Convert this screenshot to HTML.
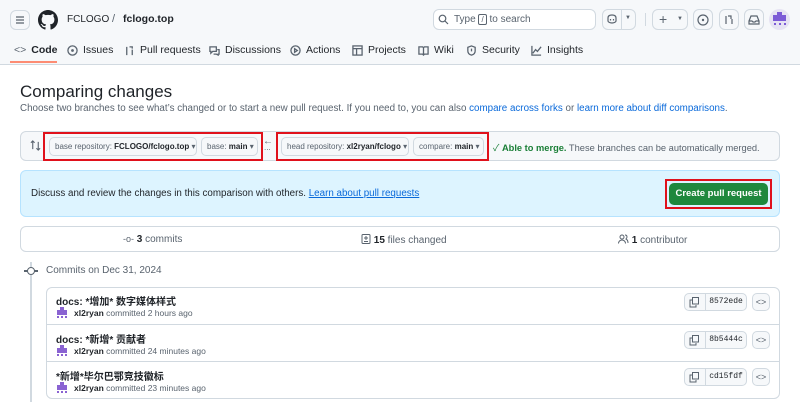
<!DOCTYPE html>
<html><head><meta charset="utf-8"><style>
*{box-sizing:border-box;margin:0;padding:0}
body{width:800px;height:411px;overflow:hidden;background:#fff;font-family:"Liberation Sans","Noto Sans CJK SC",sans-serif;color:#1f2328;font-size:12px;position:relative}
.a{position:absolute}
.hdr{left:0;top:0;width:800px;height:65px;background:#f6f8fa;border-bottom:1px solid #d1d9e0}
.btn{position:absolute;border:1px solid #d1d9e0;border-radius:6px;background:#f6f8fa}
.tab{position:absolute;top:44px;font-size:10.5px;display:flex;align-items:center;gap:5px;color:#1f2328;white-space:nowrap}
.tab svg{width:11px;height:11px;fill:none;stroke:#59636e;stroke-width:1.4}
.sel{position:absolute;top:137px;height:19px;border:1px solid #d1d9e0;border-radius:5px;background:#f6f8fa;font-size:8px;color:#59636e;line-height:17px;padding-left:5px;white-space:nowrap;overflow:hidden}
.sel b{color:#1f2328}
.red{position:absolute;border:2px solid #e0111b}
.row{position:absolute;left:46px;width:734px;height:37px;border-top:1px solid #d1d9e0}
.row .t{position:absolute;left:10px;top:6px;font-size:10px;font-weight:bold;white-space:nowrap}
.row .m{position:absolute;left:28px;top:21px;font-size:8.5px;color:#59636e;white-space:nowrap}
.row .m b{color:#1f2328}
.av{position:absolute;left:10px;top:20px;width:12px;height:11px}
.cp{position:absolute;left:638px;top:6px;width:63px;height:18px;border:1px solid #d1d9e0;border-radius:5px;background:#f6f8fa}
.cp svg{position:absolute;left:4px;top:3px}
.cp span{position:absolute;left:20px;top:0;bottom:0;right:0;border-left:1px solid #d1d9e0;font-family:"Liberation Mono",monospace;font-size:8px;line-height:16px;text-align:center;color:#1f2328}
.cd{position:absolute;left:706px;top:6px;width:18px;height:18px;border:1px solid #d1d9e0;border-radius:5px;background:#f6f8fa;font-size:9px;text-align:center;line-height:16px;color:#59636e}
.st{position:absolute;top:234px;font-size:10px;color:#59636e;white-space:nowrap;line-height:11px}
.st b{color:#1f2328}
</style></head><body>
<div class="a hdr"></div>
<div class="btn" style="left:10px;top:10px;width:20px;height:20px"><svg width="18" height="18" viewBox="0 0 18 18"><path d="M5 6h8M5 9h8M5 12h8" stroke="#59636e" stroke-width="1.3"/></svg></div>
<svg class="a" style="left:38px;top:10px" width="20" height="20" viewBox="0 0 16 16"><path fill="#1f2328" d="M8 0C3.58 0 0 3.58 0 8c0 3.540 2.29 6.53 5.47 7.59.4.07.55-.17.55-.38 0-.19-.01-.82-.01-1.49-2.01.37-2.53-.49-2.69-.94-.09-.23-.48-.94-.82-1.130-.28-.15-.68-.52-.01-.53.63-.01 1.08.58 1.23.82.72 1.21 1.87.87 2.33.66.07-.52.28-.87.51-1.07-1.78-.2-3.64-.89-3.64-3.95 0-.87.31-1.59.82-2.15-.08-.2-.36-1.02.08-2.12 0 0 .67-.21 2.2.82.64-.18 1.32-.27 2-.27.68 0 1.36.09 2 .27 1.53-1.04 2.2-.82 2.2-.82.44 1.1.16 1.92.08 2.12.51.56.82 1.27.82 2.15 0 3.07-1.87 3.75-3.65 3.95.29.25.54.73.54 1.48 0 1.07-.01 1.93-.01 2.2 0 .21.15.46.55.38A8.013 8.013 0 0016 8c0-4.42-3.58-8-8-8z"/></svg>
<div class="a" style="left:67px;top:14px;font-size:10px">FCLOGO</div>
<div class="a" style="left:112px;top:13px;font-size:11px;color:#59636e">/</div>
<div class="a" style="left:123px;top:13px;font-size:10.5px;font-weight:bold">fclogo.top</div>
<div class="a" style="left:433px;top:9px;width:163px;height:21px;border:1px solid #d1d9e0;border-radius:6px;background:#fff"></div>
<svg class="a" style="left:438px;top:14px" width="11" height="11" viewBox="0 0 11 11"><circle cx="4.5" cy="4.5" r="3.3" fill="none" stroke="#59636e" stroke-width="1.2"/><path d="M7 7l3 3" stroke="#59636e" stroke-width="1.2"/></svg>
<div class="a" style="left:454px;top:14px;font-size:10px;color:#59636e">Type <span style="border:1px solid #59636e;border-radius:2px;padding:0 2px;font-size:8px">/</span> to search</div>
<div class="btn" style="left:602px;top:9px;width:34px;height:21px"></div>
<div class="a" style="left:621px;top:9px;width:1px;height:21px;background:#d1d9e0"></div>
<svg class="a" style="left:606px;top:13px" width="12" height="12" viewBox="0 0 12 12"><path d="M2 5c0-2 1-3 4-3s4 1 4 3v3c0 1-2 2-4 2s-4-1-4-2z" fill="none" stroke="#59636e" stroke-width="1.2"/><path d="M4.5 6v1.5M7.5 6v1.5" stroke="#59636e" stroke-width="1.2"/></svg>
<div class="a" style="left:625px;top:15px;font-size:6px;color:#59636e">▼</div>
<div class="a" style="left:645px;top:13px;width:1px;height:13px;background:#d1d9e0"></div>
<div class="btn" style="left:652px;top:9px;width:36px;height:21px"><span style="position:absolute;left:6px;top:1px;font-size:14px;color:#59636e">+</span><span style="position:absolute;left:24px;top:6px;font-size:6px;color:#59636e">▼</span></div>
<div class="btn" style="left:693px;top:9px;width:20px;height:21px"><svg width="18" height="19"><circle cx="9" cy="10" r="5" fill="none" stroke="#59636e" stroke-width="1.2"/><circle cx="9" cy="10" r="1.2" fill="#59636e"/></svg></div>
<div class="btn" style="left:719px;top:9px;width:20px;height:21px"><svg width="18" height="19"><path d="M6 6v8M12 9v5M8 6h3v3" fill="none" stroke="#59636e" stroke-width="1.2"/></svg></div>
<div class="btn" style="left:744px;top:9px;width:20px;height:21px"><svg width="18" height="19"><path d="M4 11l2-5h6l2 5v3H4zM4 11h3l1 1h2l1-1h3" fill="none" stroke="#59636e" stroke-width="1.2"/></svg></div>
<div class="a" style="left:769px;top:9px;width:21px;height:21px;border-radius:50%;background:#e6e3f3;overflow:hidden"><svg width="21" height="21"><path d="M4 6h4V3h5v3h4v6H4z" fill="#7c5bd6"/><rect x="5" y="14" width="2" height="2" fill="#7c5bd6"/><rect x="10" y="14" width="2" height="2" fill="#7c5bd6"/><rect x="15" y="14" width="2" height="2" fill="#7c5bd6"/></svg></div>

<div class="tab" style="left:14px;font-weight:bold"><span style="color:#59636e;font-weight:normal">&lt;&gt;</span> Code</div>
<div class="a" style="left:10px;top:61px;width:47px;height:2px;background:#fd8c73"></div>
<div class="tab" style="left:67px"><svg viewBox="0 0 12 12"><circle cx="6" cy="6" r="5"/><circle cx="6" cy="6" r=".8"/></svg>Issues</div>
<div class="tab" style="left:124px"><svg viewBox="0 0 12 12"><path d="M3 2v9M9 5v6M6 2h3v2"/></svg>Pull requests</div>
<div class="tab" style="left:209px"><svg viewBox="0 0 12 12"><path d="M1 2h7v5H4l-2 2V7H1zM9 5h2v5h-1v1l-2-1H5"/></svg>Discussions</div>
<div class="tab" style="left:290px"><svg viewBox="0 0 12 12"><circle cx="6" cy="6" r="5"/><path d="M5 4l3 2-3 2z"/></svg>Actions</div>
<div class="tab" style="left:352px"><svg viewBox="0 0 12 12"><rect x="1" y="1" width="10" height="10"/><path d="M1 4h10M5 4v7"/></svg>Projects</div>
<div class="tab" style="left:418px"><svg viewBox="0 0 12 12"><path d="M1 2h4l1 1 1-1h4v8H7l-1 1-1-1H1zM6 3v8"/></svg>Wiki</div>
<div class="tab" style="left:466px"><svg viewBox="0 0 12 12"><path d="M6 1l4 1.5v4C10 9 8 10.5 6 11 4 10.5 2 9 2 6.5v-4zM6 4v3"/></svg>Security</div>
<div class="tab" style="left:531px"><svg viewBox="0 0 12 12"><path d="M1 1v10h10M2 9l3-4 2 2 4-5"/></svg>Insights</div>

<div class="a" style="left:20px;top:82px;font-size:17px">Comparing changes</div>
<div class="a" style="left:20px;top:103px;font-size:9.8px;color:#59636e;white-space:nowrap">Choose two branches to see what’s changed or to start a new pull request. If you need to, you can also <span style="color:#0969da">compare across forks</span> or <span style="color:#0969da">learn more about diff comparisons</span>.</div>

<div class="a" style="left:20px;top:131px;width:760px;height:30px;background:#f6f8fa;border:1px solid #d1d9e0;border-radius:6px"></div>
<svg class="a" style="left:30px;top:140px" width="11" height="11" viewBox="0 0 12 12"><path d="M3 1v9M1 3l2-2 2 2M9 11V2M7 9l2 2 2-2" fill="none" stroke="#59636e" stroke-width="1.2"/></svg>
<div class="sel" style="left:49px;width:148px">base repository: <b>FCLOGO/fclogo.top</b> ▾</div>
<div class="sel" style="left:201px;width:57px">base: <b>main</b> ▾</div>
<div class="red" style="left:43px;top:132px;width:220px;height:29px"></div>
<div class="a" style="left:263px;top:136px;font-size:10px;color:#59636e">←</div>
<div class="a" style="left:264px;top:143px;font-size:8px;color:#59636e">...</div>
<div class="sel" style="left:281px;width:128px">head repository: <b>xl2ryan/fclogo</b> ▾</div>
<div class="sel" style="left:413px;width:71px">compare: <b>main</b> ▾</div>
<div class="red" style="left:276px;top:132px;width:213px;height:29px"></div>
<div class="a" style="left:493px;top:140px;font-size:9.3px;color:#59636e;white-space:nowrap"><span style="color:#1a7f37">✓ <b>Able to merge.</b></span> These branches can be automatically merged.</div>

<div class="a" style="left:20px;top:170px;width:760px;height:47px;background:#ddf4ff;border:1px solid #b6e3ff;border-radius:6px"></div>
<div class="a" style="left:31px;top:188px;font-size:9.8px;white-space:nowrap">Discuss and review the changes in this comparison with others. <span style="color:#0969da;text-decoration:underline">Learn about pull requests</span></div>
<div class="red" style="left:665px;top:179px;width:107px;height:30px"></div>
<div class="a" style="left:669px;top:183px;width:99px;height:22px;background:#1f883d;border-radius:5px;color:#fff;font-size:9.5px;font-weight:bold;text-align:center;line-height:22px;white-space:nowrap">Create pull request</div>

<div class="a" style="left:20px;top:226px;width:760px;height:26px;border:1px solid #d1d9e0;border-radius:6px"></div>
<div class="st" style="left:123px"><span style="font-size:9px">-o-</span> <b>3</b> commits</div>
<div class="st" style="left:361px"><svg width="10" height="10" viewBox="0 0 10 10" style="vertical-align:-1px"><rect x="1" y="0.5" width="8" height="9" rx="1" fill="none" stroke="#59636e"/><path d="M3 4h4M5 2v4M3 7.5h4" stroke="#59636e"/></svg> <b>15</b> files changed</div>
<div class="st" style="left:618px"><svg width="11" height="10" viewBox="0 0 11 10" style="vertical-align:-1px"><circle cx="4" cy="3" r="2" fill="none" stroke="#59636e"/><path d="M0.5 9.5c0-2 1.5-3.5 3.5-3.5s3.5 1.5 3.5 3.5M7 1c1.5 0 2 1 2 2s-.5 1.5-1 2c1 .5 2 2 2 4" fill="none" stroke="#59636e"/></svg> <b>1</b> contributor</div>

<div class="a" style="left:30px;top:262px;width:2px;height:140px;background:#d1d9e0"></div>
<div class="a" style="left:24px;top:270px;width:14px;height:1.5px;background:#59636e"></div>
<div class="a" style="left:27px;top:267px;width:8px;height:8px;border-radius:50%;border:1.5px solid #59636e;background:#fff"></div>
<div class="a" style="left:46px;top:265px;font-size:10px;color:#59636e">Commits on Dec 31, 2024</div>
<div class="a" style="left:46px;top:287px;width:734px;height:112px;border:1px solid #d1d9e0;border-radius:6px"></div>
<div class="row" style="top:287px;border-top:none"><div class="t">docs: *增加* 数字媒体样式</div><svg class="av" viewBox="0 0 12 11"><path d="M1 3h3V0h4v3h3v5H1z" fill="#8a63d2"/><rect x="1" y="9" width="2" height="2" fill="#8a63d2"/><rect x="5" y="9" width="2" height="2" fill="#8a63d2"/><rect x="9" y="9" width="2" height="2" fill="#8a63d2"/></svg><div class="m"><b>xl2ryan</b> committed 2 hours ago</div><div class="cp"><svg width="11" height="11" viewBox="0 0 11 11"><path d="M3 3H1v7h6V8" fill="none" stroke="#59636e"/><rect x="3.5" y="0.5" width="6" height="6.5" fill="none" stroke="#59636e"/></svg><span>8572ede</span></div><div class="cd">&lt;&gt;</div></div>
<div class="row" style="top:324px"><div class="t">docs: *新增* 贡献者</div><svg class="av" viewBox="0 0 12 11"><path d="M1 3h3V0h4v3h3v5H1z" fill="#8a63d2"/><rect x="1" y="9" width="2" height="2" fill="#8a63d2"/><rect x="5" y="9" width="2" height="2" fill="#8a63d2"/><rect x="9" y="9" width="2" height="2" fill="#8a63d2"/></svg><div class="m"><b>xl2ryan</b> committed 24 minutes ago</div><div class="cp"><svg width="11" height="11" viewBox="0 0 11 11"><path d="M3 3H1v7h6V8" fill="none" stroke="#59636e"/><rect x="3.5" y="0.5" width="6" height="6.5" fill="none" stroke="#59636e"/></svg><span>8b5444c</span></div><div class="cd">&lt;&gt;</div></div>
<div class="row" style="top:361px"><div class="t">*新增*毕尔巴鄂竞技徽标</div><svg class="av" viewBox="0 0 12 11"><path d="M1 3h3V0h4v3h3v5H1z" fill="#8a63d2"/><rect x="1" y="9" width="2" height="2" fill="#8a63d2"/><rect x="5" y="9" width="2" height="2" fill="#8a63d2"/><rect x="9" y="9" width="2" height="2" fill="#8a63d2"/></svg><div class="m"><b>xl2ryan</b> committed 23 minutes ago</div><div class="cp"><svg width="11" height="11" viewBox="0 0 11 11"><path d="M3 3H1v7h6V8" fill="none" stroke="#59636e"/><rect x="3.5" y="0.5" width="6" height="6.5" fill="none" stroke="#59636e"/></svg><span>cd15fdf</span></div><div class="cd">&lt;&gt;</div></div>
</body></html>
